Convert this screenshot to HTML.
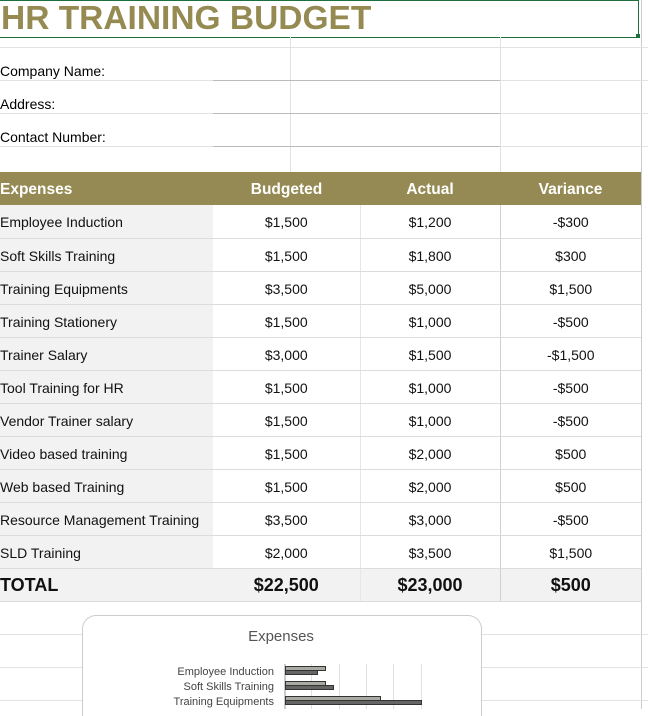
<!DOCTYPE html>
<html><head><meta charset="utf-8"><style>
body{margin:0;width:648px;height:709px;overflow:hidden;background:#fff;font-family:"Liberation Sans",Arial,sans-serif;position:relative}
.a{position:absolute}
.vl{position:absolute;width:1px;background:#e2e2e2}
.hl{position:absolute;height:1px;background:#e2e2e2}
table{position:absolute;left:0;top:172px;border-collapse:collapse;font-size:14px;color:#111}
tr{height:33px}
td{height:33px;box-sizing:border-box;padding:0;padding-top:2px;border-bottom:1px solid #dcdcdc;text-align:center}
td:first-child{text-align:left;background:#f2f2f2;width:213px}
td:nth-child(2){width:147px;border-right:1px solid #e6e6e6}
td:nth-child(3){width:140px;border-right:1px solid #d0d0d0}
td:nth-child(4){width:141px}
tr.h td{background:#968a54;color:#fff;font-weight:bold;font-size:15.5px;border-right:none;border-bottom:none}
tr.t td{background:#f2f2f2;font-weight:bold;font-size:18px}
</style></head><body>
<div class="a" style="left:0;top:0;width:638px;height:36px;border:1px solid #1e6e3e;border-left:none"></div>
<div class="a" style="left:636px;top:34px;width:4px;height:4px;background:#1e6e3e"></div>
<div class="a" style="left:1px;top:0;font-size:33.5px;font-weight:bold;color:#958a52;line-height:38px">HR TRAINING BUDGET</div>
<div class="vl" style="left:641px;top:0;height:709px;background:#ccc"></div>
<div class="vl" style="left:290px;top:37px;height:135px"></div>
<div class="vl" style="left:500px;top:37px;height:135px"></div>
<div class="hl" style="left:0;top:47px;width:648px"></div>
<div class="hl" style="left:0;top:80px;width:648px"></div>
<div class="hl" style="left:0;top:113px;width:648px"></div>
<div class="hl" style="left:0;top:146px;width:648px"></div>
<div class="hl" style="left:213px;top:80px;width:287px;background:#bbb"></div>
<div class="hl" style="left:213px;top:113px;width:287px;background:#bbb"></div>
<div class="hl" style="left:213px;top:146px;width:287px;background:#bbb"></div>
<div class="a" style="left:0;top:63px;font-size:14px">Company Name:</div>
<div class="a" style="left:0;top:96px;font-size:14px">Address:</div>
<div class="a" style="left:0;top:129px;font-size:14px">Contact Number:</div>
<table>
<tr class="h"><td>Expenses</td><td>Budgeted</td><td>Actual</td><td>Variance</td></tr>
<tr><td>Employee Induction</td><td>$1,500</td><td>$1,200</td><td>-$300</td></tr>
<tr><td>Soft Skills Training</td><td>$1,500</td><td>$1,800</td><td>$300</td></tr>
<tr><td>Training Equipments</td><td>$3,500</td><td>$5,000</td><td>$1,500</td></tr>
<tr><td>Training Stationery</td><td>$1,500</td><td>$1,000</td><td>-$500</td></tr>
<tr><td>Trainer Salary</td><td>$3,000</td><td>$1,500</td><td>-$1,500</td></tr>
<tr><td>Tool Training for HR</td><td>$1,500</td><td>$1,000</td><td>-$500</td></tr>
<tr><td>Vendor Trainer salary</td><td>$1,500</td><td>$1,000</td><td>-$500</td></tr>
<tr><td>Video based training</td><td>$1,500</td><td>$2,000</td><td>$500</td></tr>
<tr><td>Web based Training</td><td>$1,500</td><td>$2,000</td><td>$500</td></tr>
<tr><td>Resource Management Training</td><td>$3,500</td><td>$3,000</td><td>-$500</td></tr>
<tr><td>SLD Training</td><td>$2,000</td><td>$3,500</td><td>$1,500</td></tr>
<tr class="t"><td>TOTAL</td><td>$22,500</td><td>$23,000</td><td>$500</td></tr>
</table>
<div class="hl" style="left:0;top:634px;width:648px"></div>
<div class="hl" style="left:0;top:667px;width:648px"></div>
<div class="hl" style="left:0;top:700px;width:648px"></div>
<div class="a" style="left:82px;top:615px;width:398px;height:100px;background:#fff;border:1px solid #ccc;border-bottom:none;border-radius:14px 14px 0 0"></div>
<div class="a" style="left:82px;top:628px;width:398px;text-align:center;font-size:15px;color:#555">Expenses</div>
<div class="a" style="left:100px;top:665px;width:174px;text-align:right;font-size:11px;color:#444;line-height:15px">Employee Induction<br>Soft Skills Training<br>Training Equipments</div>
<svg class="a" style="left:284px;top:664px" width="160" height="45">
<g stroke="#e0e0e0"><line x1="27.5" y1="0" x2="27.5" y2="45"/><line x1="55.5" y1="0" x2="55.5" y2="45"/><line x1="82.5" y1="0" x2="82.5" y2="45"/><line x1="109.5" y1="0" x2="109.5" y2="45"/><line x1="137.5" y1="0" x2="137.5" y2="45"/></g>
<line x1="1" y1="0" x2="1" y2="45" stroke="#999"/>
<g stroke="#333" stroke-width="1">
<rect x="1.5" y="2.5" width="40" height="4" fill="#aaa9a2"/><rect x="1.5" y="6.5" width="32" height="4" fill="#666"/>
<rect x="1.5" y="17.5" width="40" height="4" fill="#aaa9a2"/><rect x="1.5" y="21.5" width="48" height="4" fill="#666"/>
<rect x="1.5" y="32.5" width="95" height="4" fill="#aaa9a2"/><rect x="1.5" y="36.5" width="136" height="4" fill="#666"/>
</g></svg>
</body></html>
